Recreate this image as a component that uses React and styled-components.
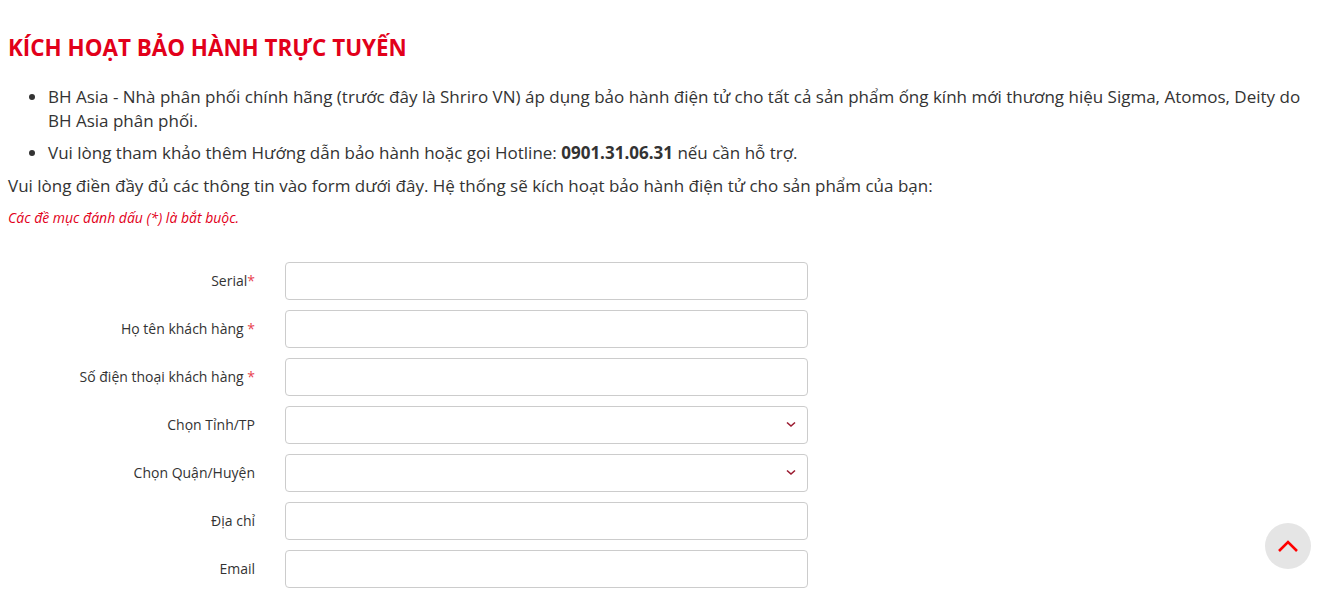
import React from 'react';
import styled, { createGlobalStyle } from 'styled-components';

const GlobalStyle = createGlobalStyle`
    body {
        margin: 0;
        font-family: "Open Sans", "Liberation Sans", sans-serif;
        color: #333;
        background: #fff;
    }
`;

const Page = styled.div`
    padding: 30px 30px 0 8px;
    height: 598px;
    box-sizing: border-box;
    overflow: hidden;
    position: relative;
`;

const Title = styled.h1`
    margin: 0 0 19px 0;
    color: #e2001a;
    font-size: 22.4px;
    font-weight: 700;
    line-height: 36px;
`;

const Bullets = styled.ul`
    margin: 0 0 9px 0;
    padding-left: 40px;
    font-size: 17px;
    line-height: 24px;

    li + li {
        margin-top: 8px;
    }
`;

const Intro = styled.p`
    margin: 0;
    font-size: 17px;
    line-height: 24px;
`;

const Note = styled.p`
    margin: 10px 0 0 0;
    color: #e2001a;
    font-size: 14px;
    font-style: italic;
    line-height: 20px;
`;

const Form = styled.form`
    margin-top: 34px;
    display: grid;
    grid-template-columns: 247px 523px;
    column-gap: 30px;
    row-gap: 10px;
`;

const Label = styled.label`
    text-align: right;
    font-size: 14px;
    line-height: 38px;
    color: #333;
`;

const Star = styled.span`
    color: #e8434f;
`;

const Input = styled.input`
    box-sizing: border-box;
    width: 100%;
    height: 38px;
    border: 1px solid #ccc;
    border-radius: 4px;
    padding: 6px 12px;
    font: inherit;
    font-size: 14px;
    background: #fff;
    outline: none;
`;

const SelectWrap = styled.div`
    position: relative;
`;

const Select = styled.select`
    box-sizing: border-box;
    width: 100%;
    height: 38px;
    border: 1px solid #ccc;
    border-radius: 4px;
    padding: 6px 12px;
    font: inherit;
    font-size: 14px;
    background: #fff;
    appearance: none;
    outline: none;
`;

const Caret = styled.svg`
    position: absolute;
    right: 12px;
    top: 15px;
    pointer-events: none;
`;

const ToTop = styled.button`
    position: absolute;
    right: 26px;
    bottom: 29px;
    width: 46px;
    height: 46px;
    border-radius: 50%;
    border: none;
    background: #e5e5e5;
    display: flex;
    align-items: center;
    justify-content: center;
    padding: 0;
    cursor: pointer;
`;

const fields = [
    { label: 'Serial', star: true, tight: true },
    { label: 'Họ tên khách hàng', star: true },
    { label: 'Số điện thoại khách hàng', star: true },
    { label: 'Chọn Tỉnh/TP', select: true },
    { label: 'Chọn Quận/Huyện', select: true },
    { label: 'Địa chỉ' },
    { label: 'Email' },
];

export default function App() {
    return <>
        <GlobalStyle />
        <Page>
            <Title>KÍCH HOẠT BẢO HÀNH TRỰC TUYẾN</Title>
            <Bullets>
                <li>BH Asia - Nhà phân phối chính hãng (trước đây là Shriro VN) áp dụng bảo hành điện tử cho tất cả sản phẩm ống kính mới thương hiệu Sigma, Atomos, Deity do BH Asia phân phối.</li>
                <li>Vui lòng tham khảo thêm Hướng dẫn bảo hành hoặc gọi Hotline: <b>0901.31.06.31</b> nếu cần hỗ trợ.</li>
            </Bullets>
            <Intro>Vui lòng điền đầy đủ các thông tin vào form dưới đây. Hệ thống sẽ kích hoạt bảo hành điện tử cho sản phẩm của bạn:</Intro>
            <Note>Các đề mục đánh dấu (*) là bắt buộc.</Note>

            <Form>
                {fields.map(f => <React.Fragment key={f.label}>
                    <Label>
                        {f.label}{f.star && <Star>{f.tight ? '*' : ' *'}</Star>}
                    </Label>
                    {f.select
                        ? <SelectWrap>
                            <Select><option></option></Select>
                            <Caret width="10" height="7" viewBox="0 0 10 7">
                                <path d="M1 1.5 L5 5 L9 1.5" fill="none" stroke="#9b1b30" strokeWidth="1.6" />
                            </Caret>
                        </SelectWrap>
                        : <Input type="text" />}
                </React.Fragment>)}
            </Form>

            <ToTop aria-label="Lên đầu trang">
                <svg width="22" height="14" viewBox="0 0 22 14">
                    <path d="M2 12 L11 3 L20 12" fill="none" stroke="#ff0000" strokeWidth="2.6" />
                </svg>
            </ToTop>
        </Page>
    </>
}
